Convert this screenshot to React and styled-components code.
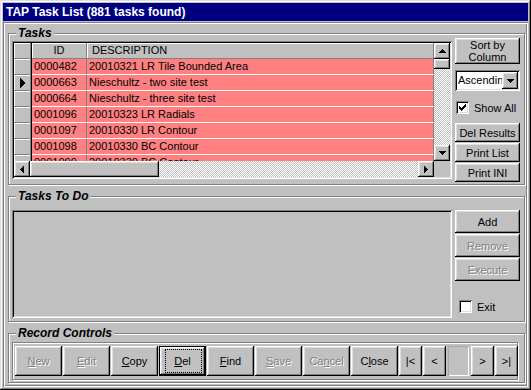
import React from 'react';
import styled, { createGlobalStyle, css } from 'styled-components';

const GlobalStyle = createGlobalStyle`
  html, body {
    margin: 0;
    padding: 0;
    background: #c0c0c0;
  }
  body {
    font-family: "Liberation Sans", Arial, sans-serif;
    font-size: 11px;
    color: #000;
  }
  * {
    box-sizing: border-box;
  }
`;

const raised = css`
  background: #c0c0c0;
  box-shadow: inset -1px -1px #000, inset 1px 1px #fff, inset -2px -2px #808080, inset 2px 2px #dfdfdf;
`;

const sunken = css`
  box-shadow: inset 1px 1px #808080, inset -1px -1px #fff, inset 2px 2px #000, inset -2px -2px #dfdfdf;
`;

const etched = css`
  border: 1px solid #808080;
  box-shadow: inset 1px 1px #fff, 1px 1px #fff;
`;

const dither = css`
  background: repeating-conic-gradient(#fff 0 25%, #c0c0c0 0 50%) 0 0 / 2px 2px;
`;

const Window = styled.div`
  width: 531px;
  height: 390px;
  padding: 3px;
  display: flex;
  flex-direction: column;
  background: #c0c0c0;
  box-shadow: inset -1px -1px #000, inset 1px 1px #dfdfdf, inset -2px -2px #808080, inset 2px 2px #fff;
`;

const TitleBar = styled.div`
  flex: none;
  height: 18px;
  padding-left: 3px;
  display: flex;
  align-items: center;
  background: #000080;
  color: #fff;
  font-weight: bold;
  font-size: 12px;
`;

const Client = styled.div`
  flex: 1;
  margin-top: 1px;
  padding: 11px 3px 0 5px;
  display: flex;
  flex-direction: column;
  gap: 11px;
  box-shadow: inset 1px 1px #808080, inset -1px -1px #fff, inset 2px 2px #fff, inset -2px -2px #808080;
`;

const Frame = styled.div`
  position: relative;
  flex: none;
  height: ${({ $h }) => $h}px;
  padding: ${({ $pad }) => $pad};
  display: flex;
  align-items: flex-start;
  ${etched};
`;

const Caption = styled.span`
  position: absolute;
  top: -8px;
  left: 7px;
  padding: 0 2px;
  background: #c0c0c0;
  font: italic bold 12px/14px "Liberation Sans", Arial, sans-serif;
`;

const Grid = styled.div`
  flex: none;
  width: 440px;
  height: 138px;
  margin-top: 3px;
  padding: 2px;
  display: grid;
  grid-template-columns: 1fr 16px;
  grid-template-rows: 1fr 16px;
  background: #c0c0c0;
  ${sunken};
`;

const Table = styled.div`
  overflow: hidden;
  display: flex;
  flex-direction: column;
  background: #ff8080;
`;

const Row = styled.div`
  flex: none;
  height: 16px;
  display: grid;
  grid-template-columns: 18px 55px 1fr;
`;

const SelCell = styled.div`
  display: flex;
  align-items: center;
  padding-left: 6px;
  background: #c0c0c0;
  border-right: 1px solid #000;
  box-shadow: inset -1px -1px #808080, inset 1px 1px #fff;
`;

const HeadCell = styled.div`
  line-height: 15px;
  padding-left: ${({ $center }) => ($center ? 0 : 5)}px;
  text-align: ${({ $center }) => ($center ? 'center' : 'left')};
  background: #c0c0c0;
  border-right: 1px solid #808080;
  border-bottom: 1px solid #808080;
  box-shadow: inset 1px 1px #fff;
  white-space: nowrap;
`;

const DataCell = styled.div`
  line-height: 15px;
  padding-left: 2px;
  background: #ff8080;
  border-right: 1px solid #808080;
  border-bottom: 1px solid #fff;
  white-space: nowrap;
  overflow: hidden;
`;

const VScroll = styled.div`
  display: flex;
  flex-direction: column;
  ${dither};
`;

const HScroll = styled.div`
  display: flex;
  ${dither};
`;

const Corner = styled.div`
  background: #c0c0c0;
`;

const ScrollBtn = styled.div`
  flex: none;
  width: 16px;
  height: 16px;
  display: flex;
  align-items: center;
  justify-content: center;
  ${raised};
`;

const Thumb = styled.div`
  flex: none;
  width: ${({ $w }) => ($w ? `${$w}px` : '16px')};
  height: ${({ $h }) => ($h ? `${$h}px` : '16px')};
  ${raised};
`;

const Spacer = styled.div`
  flex: 1;
`;

const SideCol = styled.div`
  flex: none;
  width: 65px;
  margin-left: 3px;
  display: flex;
  flex-direction: column;
`;

const WinButton = styled.button`
  position: relative;
  flex: none;
  width: ${({ $w }) => ($w ? `${$w}px` : '100%')};
  height: ${({ $h }) => $h}px;
  margin: ${({ $mt }) => $mt || 0}px 0 0 0;
  padding: 0;
  border: none;
  font-family: "Liberation Sans", Arial, sans-serif;
  font-size: 11px;
  line-height: 12px;
  color: ${({ $off }) => ($off ? '#808080' : '#000')};
  text-shadow: ${({ $off }) => ($off ? '1px 1px 0 #fff' : 'none')};
  ${raised};
  ${({ $default }) =>
    $default &&
    css`
      box-shadow: inset 0 0 0 1px #000, inset -2px -2px #000, inset 2px 2px #fff, inset -3px -3px #808080, inset 3px 3px #dfdfdf;
      &::after {
        content: '';
        position: absolute;
        inset: 3px 4px 3px 6px;
        border: 1px dotted #000;
      }
    `}

  u {
    text-underline-offset: 1px;
  }
`;

const Combo = styled.div`
  margin-top: 6px;
  height: 21px;
  padding: 2px;
  display: flex;
  background: #fff;
  ${sunken};
`;

const ComboText = styled.div`
  flex: 1;
  overflow: hidden;
  white-space: nowrap;
  padding-left: 1px;
  line-height: 17px;
`;

const ComboBtn = styled.div`
  flex: none;
  width: 16px;
  height: 17px;
  display: flex;
  align-items: center;
  justify-content: center;
  ${raised};
`;

const CheckRow = styled.label`
  display: flex;
  align-items: center;
  gap: 5px;
  margin: ${({ $mt }) => $mt}px 0 0 ${({ $ml }) => $ml}px;
  height: 13px;
`;

const CheckBox = styled.span`
  flex: none;
  width: 13px;
  height: 13px;
  display: flex;
  align-items: center;
  justify-content: center;
  background: #fff;
  ${sunken};
`;

const ListBox = styled.div`
  flex: none;
  width: 440px;
  height: 108px;
  background: #c0c0c0;
  ${sunken};
`;

const Panel = styled.div`
  flex: none;
  width: 506px;
  height: 38px;
  padding: 3px 0 0 2px;
  display: flex;
  align-items: flex-start;
  gap: 1px;
  ${etched};
`;

const NavField = styled.div`
  flex: none;
  width: 21px;
  height: 30px;
  margin: 0 1px;
  background: #c0c0c0;
  box-shadow: inset 1px 1px #a8a8a8, inset -1px -1px #fff;
`;

const Tri = ({ dir }) => {
  const pts = {
    up: '0,4 7,4 3.5,0',
    down: '0,0 7,0 3.5,4',
    left: '4,0 4,7 0,3.5',
    right: '0,0 0,7 4,3.5',
  }[dir];
  const vertical = dir === 'up' || dir === 'down';
  return (
    <svg width={vertical ? 7 : 4} height={vertical ? 4 : 7} shapeRendering="crispEdges">
      <polygon points={pts} fill="#000" />
    </svg>
  );
};

const tasks = [
  ['0000482', '20010321 LR Tile Bounded Area'],
  ['0000663', 'Nieschultz - two site test'],
  ['0000664', 'Nieschultz - three site test'],
  ['0001096', '20010323 LR Radials'],
  ['0001097', '20010330 LR Contour'],
  ['0001098', '20010330 BC Contour'],
  ['0001099', '20010330 BC Contour'],
];

const App = () => {
  return (
    <>
      <GlobalStyle />
      <Window>
        <TitleBar>TAP Task List (881 tasks found)</TitleBar>
        <Client>
          <Frame $h={152} $pad="4px 0 0 3px">
            <Caption>Tasks</Caption>
            <Grid>
              <Table>
                <Row>
                  <SelCell />
                  <HeadCell $center>ID</HeadCell>
                  <HeadCell>DESCRIPTION</HeadCell>
                </Row>
                {tasks.map(([id, desc], i) => (
                  <Row key={id}>
                    <SelCell>
                      {i === 1 && (
                        <svg width="6" height="10" shapeRendering="crispEdges">
                          <polygon points="0,0 0,10 5,5" fill="#000" />
                        </svg>
                      )}
                    </SelCell>
                    <DataCell>{id}</DataCell>
                    <DataCell>{desc}</DataCell>
                  </Row>
                ))}
              </Table>
              <VScroll>
                <ScrollBtn><Tri dir="up" /></ScrollBtn>
                <Thumb $h={10} />
                <Spacer />
                <ScrollBtn><Tri dir="down" /></ScrollBtn>
              </VScroll>
              <HScroll>
                <ScrollBtn><Tri dir="left" /></ScrollBtn>
                <Thumb $w={129} />
                <Spacer />
                <ScrollBtn><Tri dir="right" /></ScrollBtn>
              </HScroll>
              <Corner />
            </Grid>
            <SideCol>
              <WinButton $h={26}>Sort by<br />Column</WinButton>
              <Combo>
                <ComboText>Ascending</ComboText>
                <ComboBtn><Tri dir="down" /></ComboBtn>
              </Combo>
              <CheckRow $mt={10} $ml={1}>
                <CheckBox>
                  <svg width="7" height="7" shapeRendering="crispEdges">
                    <path d="M0 2h1v1h1v1h1V3h1V2h1V1h1V0h1v3H6v1H5v1H4v1H3v1H2V6H1V5H0z" fill="#000" />
                  </svg>
                </CheckBox>
                Show All
              </CheckRow>
              <WinButton $h={19} $mt={9}>Del Results</WinButton>
              <WinButton $h={19} $mt={1}>Print List</WinButton>
              <WinButton $h={19} $mt={1}>Print INI</WinButton>
            </SideCol>
          </Frame>

          <Frame $h={126} $pad="13px 0 0 3px">
            <Caption>Tasks To Do</Caption>
            <ListBox />
            <SideCol>
              <WinButton $h={23}>Add</WinButton>
              <WinButton $h={23} $mt={1} $off>Remove</WinButton>
              <WinButton $h={23} $mt={1} $off>Execute</WinButton>
              <CheckRow $mt={19} $ml={4}>
                <CheckBox />
                Exit
              </CheckRow>
            </SideCol>
          </Frame>

          <Frame $h={50} $pad="8px 0 0 3px">
            <Caption>Record Controls</Caption>
            <Panel>
              <WinButton $w={47} $h={30} $off><u>N</u>ew</WinButton>
              <WinButton $w={47} $h={30} $off><u>E</u>dit</WinButton>
              <WinButton $w={47} $h={30}><u>C</u>opy</WinButton>
              <WinButton $w={47} $h={30} $default><u>D</u>el</WinButton>
              <WinButton $w={47} $h={30}><u>F</u>ind</WinButton>
              <WinButton $w={47} $h={30} $off><u>S</u>ave</WinButton>
              <WinButton $w={47} $h={30} $off>Ca<u>n</u>cel</WinButton>
              <WinButton $w={47} $h={30}>C<u>l</u>ose</WinButton>
              <WinButton $w={23} $h={30}>|&lt;</WinButton>
              <WinButton $w={23} $h={30}>&lt;</WinButton>
              <NavField />
              <WinButton $w={23} $h={30}>&gt;</WinButton>
              <WinButton $w={23} $h={30}>&gt;|</WinButton>
            </Panel>
          </Frame>
        </Client>
      </Window>
    </>
  );
};

export default App;
